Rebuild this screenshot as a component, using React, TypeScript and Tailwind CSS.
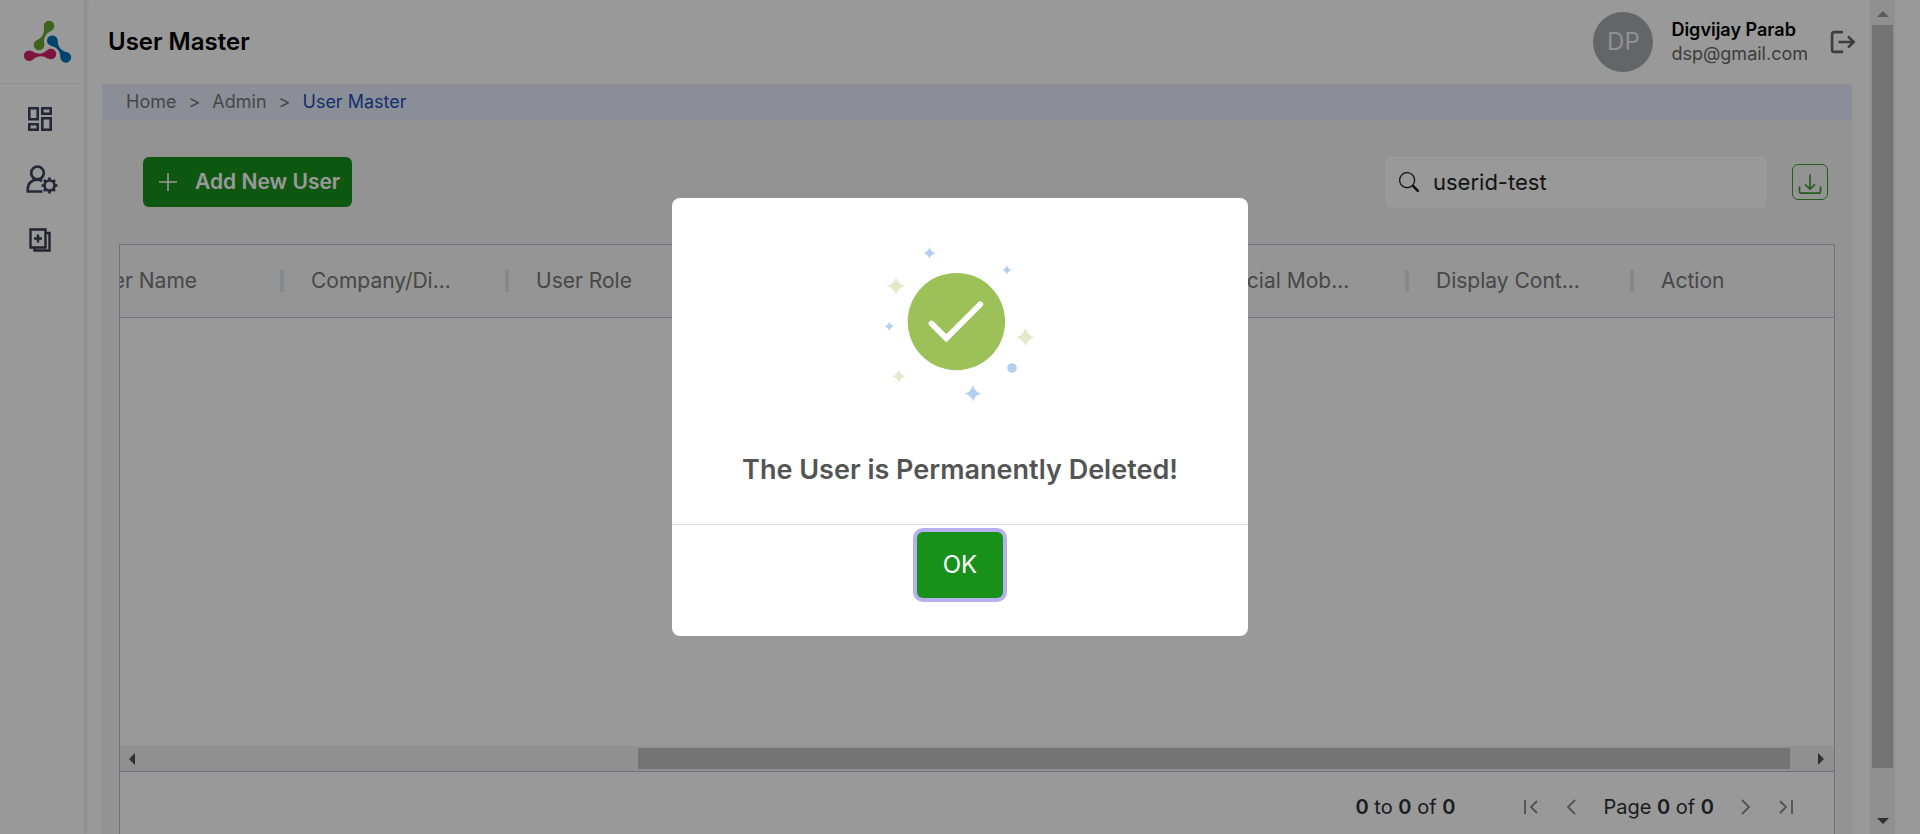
import React from "react";
import { BsSearch } from "react-icons/bs";

const lobe = "M3-4.400C8-.300 13.500-.300 18.500-4.400V4.400C13.500.300 8 .300 3 4.400Z";

function Logo() {
  return (
    <svg viewBox="0 0 48 43" className="h-[43px] w-12" aria-label="Logo" role="img">
      <g fill="#66a52f" transform="translate(15 25) rotate(-62.200)">
        <circle r="5.300" />
        <circle cx="21.500" r="5.300" />
        <path d={lobe} />
      </g>
      <g fill="#0070b8" transform="translate(28.300 20.700) rotate(51.100)">
        <circle r="5.300" />
        <circle cx="21.500" r="5.300" />
        <path d={lobe} />
      </g>
      <g fill="#d0246b" transform="translate(5.200 35.700) rotate(-4.400)">
        <circle r="5.300" />
        <circle cx="21.800" r="5.300" />
        <path d={lobe} />
      </g>
    </svg>
  );
}

function DashboardIcon() {
  return (
    <svg viewBox="0 0 24 24" className="size-6" fill="none" stroke="#3d445c" strokeWidth="2.600">
      <path d="M1.300 1.300h8.400v10.900H1.300zM14.300 1.300h8.400v5.400h-8.400zM14.300 11.300h8.400v11.400h-8.400zM1.300 17.300h8.400v5.400H1.300z" />
    </svg>
  );
}

function UserCogIcon() {
  return (
    <svg viewBox="0 0 32 29" className="ml-1 h-[29px] w-8" fill="none" stroke="#3d445c" strokeWidth="2.700">
      <circle cx="11.500" cy="8" r="6.300" />
      <path d="M16.500 26.500H1.800V24c0-5.500 4-9.300 9.200-9.300 2 0 3.500.4 5 1.300" />
      <circle cx="23.500" cy="20.500" r="5" />
      <path d="M23.500 15.500v-3M23.500 28.500v-3M18.500 20.500h-3M31.500 20.500h-3M20 17l-2-2M29 26l-2-2M20 24l-2 2M29 15l-2 2" />
    </svg>
  );
}

function CopyPlusIcon() {
  return (
    <svg viewBox="0 0 22 24" className="h-6 w-[22px]" fill="none" stroke="#363d4e" strokeWidth="2.400">
      <path d="M1.500 1.500h15v18h-15zM17 5h3.500v17.500H5.500V20M9 6.500v8M5 10.500h8" />
    </svg>
  );
}

function LogoutIcon() {
  return (
    <svg viewBox="0 0 26 24" className="h-6 w-[26px]" fill="none" stroke="#666" strokeWidth="2.600">
      <path d="M13 2.100H4.100a2 2 0 0 0-2 2v15.800a2 2 0 0 0 2 2H13M8.500 12h15M18 6.300L23.700 12 18 17.700" />
    </svg>
  );
}

function DownloadIcon() {
  return (
    <svg viewBox="0 0 24 22" className="mt-1 h-[22px] w-6" fill="none" stroke="#3f9c35" strokeWidth="1.700" strokeLinecap="round" strokeLinejoin="round">
      <path d="M1.500 14v4.200a2 2 0 0 0 2 2h17a2 2 0 0 0 2-2V14M12 2v14M7.500 11.800L12 16.200l4.500-4.400" />
    </svg>
  );
}

const columns = [
  { label: "User Name", width: "w-[225px]" },
  { label: "Company/Di...", width: "w-[225px]" },
  { label: "User Role", width: "w-[225px]" },
  { label: "", width: "w-[225px]" },
  { label: "", width: "w-[225px]" },
  { label: "Official Mob...", width: "w-[225px]" },
  { label: "Display Cont...", width: "w-[225px]" },
  { label: "Action", width: "w-[200px]" },
];

function Sidebar() {
  return (
    <aside className="flex w-[85px] shrink-0 flex-col border-r border-[#f0f0f0] bg-white shadow-[2px_0_4px_rgba(0,0,0,0.08)]">
      <div className="mr-1 flex h-[84px] items-center border-b border-[#eee] pl-6">
        <Logo />
      </div>
      <nav className="flex flex-col items-center gap-[34px] pt-[23px] pr-1">
        <a href="#dashboard" aria-label="Dashboard"><DashboardIcon /></a>
        <a href="#users" aria-label="User settings"><UserCogIcon /></a>
        <a href="#masters" aria-label="Masters"><CopyPlusIcon /></a>
      </nav>
    </aside>
  );
}

function Header() {
  return (
    <header className="flex h-[84px] shrink-0 items-center justify-between pr-3.5 pl-[23px]">
      <h1 className="text-2xl font-semibold text-black">User Master</h1>
      <div className="flex items-center">
        <div className="flex size-[60px] items-center justify-center rounded-full bg-[#a6a8b0] text-2xl text-[#f0f0f0]">DP</div>
        <div className="ml-[18px] text-lg leading-6">
          <div className="font-semibold text-black">Digvijay Parab</div>
          <div className="text-[#666]">dsp@gmail.com</div>
        </div>
        <button type="button" aria-label="Log out" className="ml-[22px]">
          <LogoutIcon />
        </button>
      </div>
    </header>
  );
}

function Breadcrumb() {
  return (
    <nav aria-label="Breadcrumb" className="flex h-9 shrink-0 items-center gap-3 bg-[#e8edfc] pl-6 text-lg text-[#777]">
      <a href="#home">Home</a>
      <span>&gt;</span>
      <a href="#admin">Admin</a>
      <span>&gt;</span>
      <a href="#user-master" className="text-[#2450b8]">User Master</a>
    </nav>
  );
}

function Toolbar() {
  return (
    <div className="flex h-[124px] shrink-0 items-center pr-6 pl-[41px]">
      <button type="button" className="flex h-[50px] items-center rounded-md bg-[#18911b] pr-3 pl-4 text-[21px] font-semibold text-white">
        <svg viewBox="0 0 18 18" className="mr-[18px] size-[18px]" stroke="currentColor" strokeWidth="1.600" aria-hidden="true">
          <path d="M9 0v18M0 9h18" />
        </svg>
        Add New User
      </button>
      <label className="mr-6 ml-auto flex h-[54px] w-96 items-center rounded-md border border-[#eee] bg-white pl-3.5">
        <BsSearch className="mr-3.5 size-5 shrink-0 text-[#222]" />
        <input aria-label="Search" defaultValue="userid-test" className="min-w-0 flex-1 bg-transparent text-[22px] text-[#222] outline-none" />
      </label>
      <button type="button" aria-label="Download" className="flex size-9 items-center justify-center rounded-md border border-[#3f9c35]">
        <DownloadIcon />
      </button>
    </div>
  );
}

const pageIcons = {
  first: "M2 1v14M14 2L8 8l6 6",
  prev: "M12 1L5 8l7 7",
  next: "M4 1l7 7-7 7",
  last: "M2 2l6 6-6 6M14 1v14",
};

function PageButton({ label, d }: { label: string; d: string }) {
  return (
    <button type="button" aria-label={label}>
      <svg viewBox="0 0 16 16" className="size-4" fill="none" stroke="#888" strokeWidth="1.800">
        <path d={d} />
      </svg>
    </button>
  );
}

function Pagination() {
  return (
    <div className="flex h-[62px] items-center justify-end pt-2 pr-10 text-xl text-[#2c3035]">
      <span className="mr-[68px]">
        <b className="font-semibold">0</b> to <b className="font-semibold">0</b> of <b className="font-semibold">0</b>
      </span>
      <div className="flex items-center gap-6">
        <PageButton label="First page" d={pageIcons.first} />
        <PageButton label="Previous page" d={pageIcons.prev} />
        <span>
          Page <b className="font-semibold">0</b> of <b className="font-semibold">0</b>
        </span>
        <PageButton label="Next page" d={pageIcons.next} />
        <PageButton label="Last page" d={pageIcons.last} />
      </div>
    </div>
  );
}

function Grid() {
  return (
    <section className="mx-[17px] flex flex-1 flex-col border border-b-0 border-[#babfc7] bg-white">
      <div className="flex justify-end overflow-hidden border-b border-[#babfc7] bg-[#f8f8f8]">
        <table className="w-[1775px] shrink-0 table-fixed border-collapse text-left text-[21px] text-[#777]">
          <thead>
            <tr className="h-[72px]">
              {columns.map((c, i) => (
                <th key={i} className={`${c.width} p-0 font-normal`}>
                  <div className={i < 7 ? "flex h-[22px] items-center border-r-4 border-[#dfe3ee] pl-[27px]" : "flex h-[22px] items-center pl-[27px]"}>
                    {c.label}
                  </div>
                </th>
              ))}
            </tr>
          </thead>
        </table>
      </div>
      <div className="flex-1" />
      <div aria-hidden="true" className="flex h-[26px] items-center border-b border-[#babfc7] bg-[#f1f1f1]">
        <svg viewBox="0 0 6 12" className="ml-[9px] h-3 w-1.5" fill="#505050"><path d="M6 0v12L0 6z" /></svg>
        <div className="mr-7 ml-auto h-[21px] w-[67.200%] bg-[#c1c1c1]" />
        <svg viewBox="0 0 6 12" className="mr-2.5 h-3 w-1.5" fill="#505050"><path d="M0 0v12l6-6z" /></svg>
      </div>
      <Pagination />
    </section>
  );
}

function PageScrollbar() {
  return (
    <div aria-hidden="true" className="mr-[25px] flex w-[25px] shrink-0 flex-col items-center bg-[#f1f1f1]">
      <svg viewBox="0 0 12 6" className="mt-[11px] mb-2 h-1.5 w-3" fill="#999"><path d="M0 6h12L6 0z" /></svg>
      <div className="mb-[50px] w-[21px] flex-1 bg-[#c1c1c1]" />
      <svg viewBox="0 0 12 6" className="mb-2.5 h-1.5 w-3" fill="#505050"><path d="M0 0h12L6 6z" /></svg>
    </div>
  );
}

const sparkles = [
  { x: 59.5, y: 23, r: 6, fill: "#b1d0ee" },
  { x: 137, y: 40, r: 4.8, fill: "#b1d0ee" },
  { x: 26, y: 56, r: 9.3, fill: "#e3e9c8" },
  { x: 19.3, y: 96.3, r: 4.8, fill: "#b1d0ee" },
  { x: 155.5, y: 107.3, r: 9.3, fill: "#e3e9c8" },
  { x: 29, y: 146.3, r: 6.5, fill: "#e3e9c8" },
  { x: 103, y: 163.5, r: 8.3, fill: "#b1d0ee" },
];

function SuccessArt() {
  return (
    <svg viewBox="0 0 180 180" className="size-[180px]" aria-hidden="true">
      <circle cx="86.400" cy="91.600" r="48.700" fill="#9bc158" />
      <path d="M61.500 93.500L76.300 108.300L110.300 74.300" fill="none" stroke="#fff" strokeWidth="5.800" strokeLinecap="round" />
      {sparkles.map((s, i) => (
        <path key={i} transform={`translate(${s.x} ${s.y}) scale(${s.r})`} d="M0-1Q.2-.2 1 0Q.2.2 0 1Q-.2.2-1 0Q-.2-.2 0-1Z" fill={s.fill} />
      ))}
      <circle cx="142" cy="138" r="4.800" fill="#b1d0ee" />
    </svg>
  );
}

function SuccessDialog() {
  return (
    <div className="absolute inset-0 flex items-center justify-center bg-black/40">
      <div role="alertdialog" aria-modal="true" aria-labelledby="dialog-title" className="flex w-[576px] flex-col items-center rounded-lg bg-white pt-8">
        <SuccessArt />
        <h2 id="dialog-title" className="mt-[42px] mb-9 text-[27px] leading-9 font-semibold text-[#545454]">
          The User is Permanently Deleted!
        </h2>
        <div className="flex w-full justify-center border-t border-[#ddd] pt-[7px] pb-[38px]">
          <button type="button" className="h-[66px] w-[86px] rounded-md bg-[#18911b] text-2xl text-white ring-4 ring-[#b6b0ee]">
            OK
          </button>
        </div>
      </div>
    </div>
  );
}

export default function App() {
  return (
    <div className="relative flex h-screen overflow-hidden bg-white font-[Inter,sans-serif]">
      <Sidebar />
      <div className="flex min-w-0 flex-1 flex-col">
        <Header />
        <main className="mr-[18px] ml-[17px] flex flex-1 flex-col bg-[#f5f5f5]">
          <Breadcrumb />
          <Toolbar />
          <Grid />
        </main>
      </div>
      <PageScrollbar />
      <SuccessDialog />
    </div>
  );
}
